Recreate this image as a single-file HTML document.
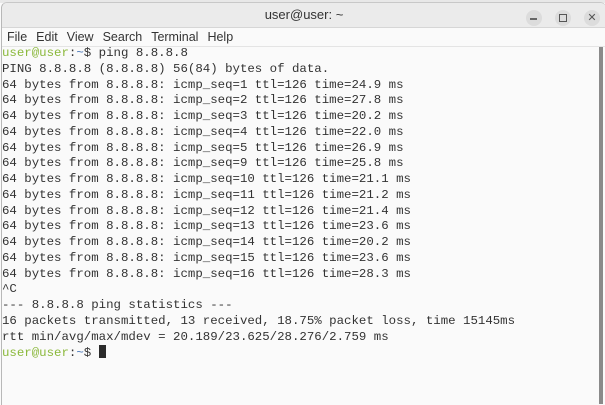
<!DOCTYPE html>
<html><head><style>
body{margin:0;width:605px;height:404px;overflow:hidden;background:#fafafa;position:relative;font-family:"Liberation Sans",sans-serif}
.top{position:absolute;left:0;top:0;width:605px;height:3px;background:#e8e8e8}
.win{position:absolute;left:1px;top:2px;width:604px;height:402px;border-left:1px solid #b8b8b8;border-top:1px solid #c8c8c8;border-radius:6px 6px 0 0;background:#fafafa;overflow:hidden}
.title{height:24px;background:#ebebeb;border-bottom:1px solid #d6d6d6;text-align:center;font-size:13px;line-height:24px;color:#333}
.btn{position:absolute;top:7px;width:16px;height:16px;border-radius:50%;background:#dcdcdc}
.menu{height:18px;font-size:12.5px;line-height:18px;color:#333;padding-left:5px;border-bottom:1px solid #e4e4e4;background:#fafafa}
.menu span{margin-right:9px}
pre{position:absolute;left:2px;top:46px;margin:0;font-family:"Liberation Mono",monospace;font-size:12.4px;line-height:15.75px;color:#333}
.g{color:#8ab83a}.b{color:#4a78b8}
.sb{position:absolute;left:599px;top:47px;width:4px;height:357px;background:#8a8a8a}
.cur{display:inline-block;width:7px;height:13px;background:#2b2b2b;vertical-align:-2px}
</style></head><body>
<div class="top"></div>
<div class="win">
<div class="title">user@user: ~</div>
<div class="btn" style="left:524px"><div style="position:absolute;left:4px;top:8px;width:7px;height:2px;background:#666"></div></div>
<div class="btn" style="left:553px"><div style="position:absolute;left:4px;top:4px;width:6px;height:6px;border:1px solid #555"></div></div>
<div class="btn" style="left:582px;text-align:center;font-size:11px;line-height:16px;color:#555">✕</div>
<div class="menu"><span>File</span><span>Edit</span><span>View</span><span>Search</span><span>Terminal</span><span>Help</span></div>
</div>
<pre><span class="g">user@user</span>:<span class="b">~</span>$ ping 8.8.8.8
PING 8.8.8.8 (8.8.8.8) 56(84) bytes of data.
64 bytes from 8.8.8.8: icmp_seq=1 ttl=126 time=24.9 ms
64 bytes from 8.8.8.8: icmp_seq=2 ttl=126 time=27.8 ms
64 bytes from 8.8.8.8: icmp_seq=3 ttl=126 time=20.2 ms
64 bytes from 8.8.8.8: icmp_seq=4 ttl=126 time=22.0 ms
64 bytes from 8.8.8.8: icmp_seq=5 ttl=126 time=26.9 ms
64 bytes from 8.8.8.8: icmp_seq=9 ttl=126 time=25.8 ms
64 bytes from 8.8.8.8: icmp_seq=10 ttl=126 time=21.1 ms
64 bytes from 8.8.8.8: icmp_seq=11 ttl=126 time=21.2 ms
64 bytes from 8.8.8.8: icmp_seq=12 ttl=126 time=21.4 ms
64 bytes from 8.8.8.8: icmp_seq=13 ttl=126 time=23.6 ms
64 bytes from 8.8.8.8: icmp_seq=14 ttl=126 time=20.2 ms
64 bytes from 8.8.8.8: icmp_seq=15 ttl=126 time=23.6 ms
64 bytes from 8.8.8.8: icmp_seq=16 ttl=126 time=28.3 ms
^C
--- 8.8.8.8 ping statistics ---
16 packets transmitted, 13 received, 18.75% packet loss, time 15145ms
rtt min/avg/max/mdev = 20.189/23.625/28.276/2.759 ms
<span class="g">user@user</span>:<span class="b">~</span>$ <span class="cur"></span></pre>
<div class="sb"></div>
</body></html>
